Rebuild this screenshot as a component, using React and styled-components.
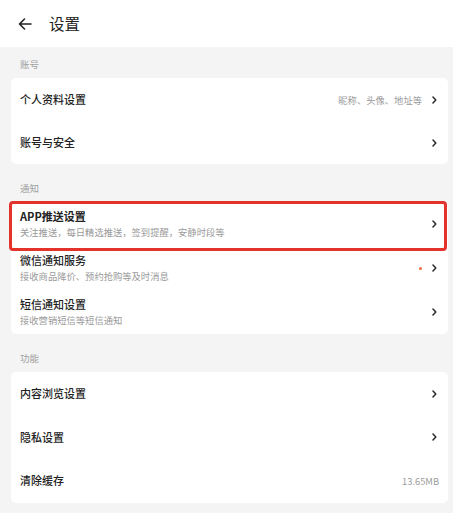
import React from "react";
import styled, { createGlobalStyle } from "styled-components";

const Global = createGlobalStyle`
  html, body { margin: 0; padding: 0; background: #f4f4f4; }
  body { font-family: "Noto Sans CJK SC", "Noto Sans", sans-serif; -webkit-font-smoothing: antialiased; }
  * { box-sizing: border-box; }
`;

const Page = styled.div`
  width: 453px;
  min-height: 513px;
  background: #f4f4f4;
  position: relative;
  overflow: hidden;
`;

const Header = styled.header`
  height: 47px;
  background: #fff;
  display: flex;
  align-items: center;
  padding-left: 18px;
  gap: 17px;
`;

const Title = styled.h1`
  margin: 0;
  font-size: 15.5px;
  font-weight: 400;
  color: #222;
  line-height: 1;
`;

const SectionLabel = styled.div`
  font-size: 9.5px;
  color: #a0a0a0;
  line-height: 14px;
  padding: ${(p) => (p.$first ? "10px" : "17px")} 20px 7px;
`;

const Card = styled.div`
  margin: 0 5px 0 11px;
  background: #fff;
  border-radius: 5px;
  display: flex;
  flex-direction: column;
`;

const Row = styled.div`
  position: relative;
  height: ${(p) => p.$h}px;
  display: flex;
  align-items: center;
  padding: 0 11px 0 9px;
`;

const Texts = styled.div`
  flex: 1;
  display: flex;
  flex-direction: column;
  gap: 3px;
`;

const RowTitle = styled.div`
  font-size: 11px;
  font-weight: ${(p) => (p.$strong ? 700 : 500)};
  color: #222;
  line-height: 13px;
`;

const RowSub = styled.div`
  font-size: 9.3px;
  color: #9a9a9a;
  line-height: 12px;
`;

const RightText = styled.span`
  font-size: 9.3px;
  color: #9a9a9a;
  margin-right: ${(p) => (p.$last ? "-2px" : "10px")};
`;

const Dot = styled.span`
  width: 3px;
  height: 3px;
  border-radius: 50%;
  background: #ef6a3c;
  margin-right: 10px;
`;

const Highlight = styled.div`
  position: absolute;
  left: -2px;
  top: -1px;
  right: 1px;
  bottom: -5px;
  border: 3px solid #e3332b;
  border-radius: 4px;
  pointer-events: none;
`;

const Chevron = () => (
  <svg width="5" height="8" viewBox="0 0 5 8">
    <path d="M1 1 L3.8 4 L1 7" fill="none" stroke="#2a2a2a" strokeWidth="1.5" strokeLinejoin="round" strokeLinecap="round" />
  </svg>
);

const BackArrow = () => (
  <svg width="14" height="12" viewBox="0 0 14 12">
    <path d="M13 6 H1.5 M6.5 1 L1.5 6 L6.5 11" fill="none" stroke="#222" strokeWidth="1.6" strokeLinecap="round" strokeLinejoin="round" />
  </svg>
);

const sections = [
  {
    label: "账号",
    h: 43,
    rows: [
      { title: "个人资料设置", right: "昵称、头像、地址等", chevron: true },
      { title: "账号与安全", chevron: true },
    ],
  },
  {
    label: "通知",
    h: 44,
    rows: [
      { title: "APP推送设置", sub: "关注推送，每日精选推送，签到提醒，安静时段等", chevron: true, highlight: true, strong: true },
      { title: "微信通知服务", sub: "接收商品降价、预约抢购等及时消息", chevron: true, dot: true },
      { title: "短信通知设置", sub: "接收营销短信等短信通知", chevron: true },
    ],
  },
  {
    label: "功能",
    h: 43.5,
    rows: [
      { title: "内容浏览设置", chevron: true },
      { title: "隐私设置", chevron: true },
      { title: "清除缓存", right: "13.65MB", last: true },
    ],
  },
];

export default function App() {
  return (
    <Page>
      <Global />
      <Header>
        <BackArrow />
        <Title>设置</Title>
      </Header>
      {sections.map((s, i) => (
        <React.Fragment key={s.label}>
          <SectionLabel $first={i === 0}>{s.label}</SectionLabel>
          <Card>
            {s.rows.map((r) => (
              <Row key={r.title} $h={s.h}>
                <Texts>
                  <RowTitle $strong={r.strong}>{r.title}</RowTitle>
                  {r.sub && <RowSub>{r.sub}</RowSub>}
                </Texts>
                {r.right && <RightText $last={r.last}>{r.right}</RightText>}
                {r.dot && <Dot />}
                {r.chevron && <Chevron />}
                {r.highlight && <Highlight />}
              </Row>
            ))}
          </Card>
        </React.Fragment>
      ))}
    </Page>
  );
}
